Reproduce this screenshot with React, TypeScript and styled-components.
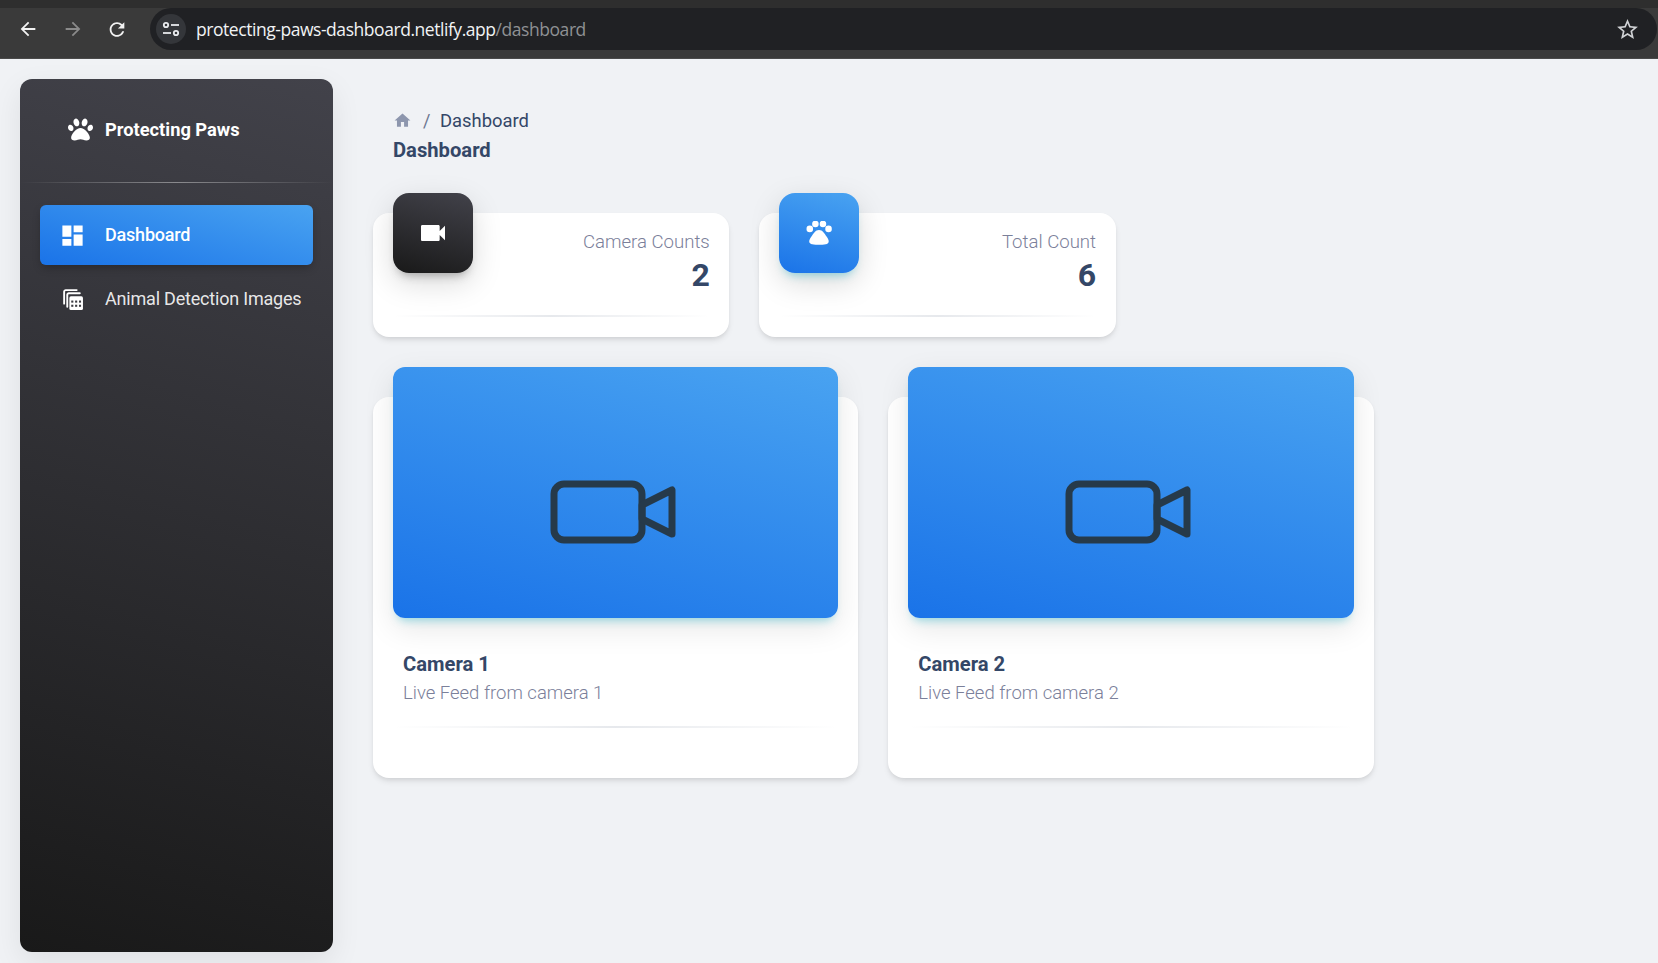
import React from 'react';
import styled, { createGlobalStyle } from 'styled-components';
import { FaPaw } from 'react-icons/fa';
import { MdDashboard, MdHome, MdVideocam, MdOutlineArrowBack, MdOutlineArrowForward, MdRefresh, MdOutlineStarBorder } from 'react-icons/md';

const GlobalStyle = createGlobalStyle`
  html, body { margin: 0; padding: 0; height: 100%; overflow: hidden; }
  body { background: #f0f2f5; font-family: Roboto, "Liberation Sans", sans-serif; }
  * { box-sizing: border-box; }
`;

const SiteIcon = () => (
  <svg width="18" height="16" viewBox="0 0 18 16" fill="none" stroke="#e8eaed" strokeWidth="1.8">
    <circle cx="4" cy="4" r="2.2" />
    <path d="M9 4H17" />
    <path d="M1 12H9" />
    <circle cx="14" cy="12" r="2.2" />
  </svg>
);

const GalleryIcon = () => (
  <svg width="23" height="23" viewBox="0 0 22 22" fill="none">
    <path d="M3 15V3.5C3 2.7 3.7 2 4.5 2H15" stroke="#fff" strokeWidth="1.8" strokeLinecap="round" />
    <path d="M6 18V6.5C6 5.7 6.7 5 7.5 5H18" stroke="#fff" strokeWidth="1.8" strokeLinecap="round" />
    <rect x="8" y="8" width="13" height="13" rx="1.5" fill="#fff" />
    <g fill="#3a3a40">
      <rect x="9.8" y="12" width="2" height="2" />
      <rect x="13.5" y="12" width="2" height="2" />
      <rect x="17.2" y="12" width="2" height="2" />
      <rect x="9.8" y="16" width="2" height="2" />
      <rect x="13.5" y="16" width="2" height="2" />
      <rect x="17.2" y="16" width="2" height="2" />
    </g>
  </svg>
);

const RoundPaw = () => (
  <svg width="26" height="24" viewBox="0 0 78 73" fill="#fff">
    <circle cx="11" cy="24" r="10" />
    <circle cx="28" cy="9" r="10" />
    <circle cx="51" cy="9" r="10" />
    <circle cx="68" cy="24" r="10" />
    <path d="M39 27C50 27 56 38 62 47C68 56 71 62 66 68C62 73 52 72 39 72C26 72 16 73 12 68C7 62 10 56 16 47C22 38 28 27 39 27Z" />
  </svg>
);

const BigCamera = () => (
  <svg width="126" height="64" viewBox="0 0 126 64" fill="none" stroke="#263a4a" strokeWidth="7" strokeLinejoin="round">
    <rect x="4" y="4" width="88" height="56" rx="10" />
    <path d="M92 25L122 10V54L92 39Z" />
  </svg>
);

const App = () => {
  const stats = [
    { label: 'Camera Counts', value: '2', dark: true, icon: <MdVideocam size={32} /> },
    { label: 'Total Count', value: '6', dark: false, icon: <RoundPaw /> },
  ];
  const cameras = ['1', '2'];

  return (
    <>
      <GlobalStyle />
      <Page>
        <BrowserBar>
          <NavButtons>
            <NavBtn><MdOutlineArrowBack size={22} /></NavBtn>
            <NavBtn $off><MdOutlineArrowForward size={22} /></NavBtn>
            <NavBtn><MdRefresh size={25} /></NavBtn>
          </NavButtons>
          <Omnibox>
            <SiteChip><SiteIcon /></SiteChip>
            <Url>protecting-paws-dashboard.netlify.app<UrlPath>/dashboard</UrlPath></Url>
            <Star><MdOutlineStarBorder size={25} /></Star>
          </Omnibox>
        </BrowserBar>
        <Body>
          <Sidebar>
            <Brand>
              <FaPaw size={25} />
              <BrandName>Protecting Paws</BrandName>
            </Brand>
            <SideDivider />
            <NavList>
              <NavItem $active>
                <NavIcon><MdDashboard size={27} /></NavIcon>
                Dashboard
              </NavItem>
              <NavItem>
                <NavIcon $inset><GalleryIcon /></NavIcon>
                Animal Detection Images
              </NavItem>
            </NavList>
          </Sidebar>
          <Main>
            <Header>
              <Crumbs>
                <MdHome size={19} color="#8d96ad" />
                <Slash>/</Slash>
                <Crumb>Dashboard</Crumb>
              </Crumbs>
              <PageTitle>Dashboard</PageTitle>
            </Header>
            <StatRow>
              {stats.map((s) => (
                <StatCard key={s.label}>
                  <StatBadge $dark={s.dark}>{s.icon}</StatBadge>
                  <StatLabel>{s.label}</StatLabel>
                  <StatValue>{s.value}</StatValue>
                  <StatLine />
                </StatCard>
              ))}
            </StatRow>
            <CameraRow>
              {cameras.map((n) => (
                <CameraCard key={n}>
                  <CameraFeed><BigCamera /></CameraFeed>
                  <CameraText>
                    <CameraName>Camera {n}</CameraName>
                    <CameraSub>Live Feed from camera {n}</CameraSub>
                  </CameraText>
                  <CameraLine />
                </CameraCard>
              ))}
            </CameraRow>
          </Main>
        </Body>
      </Page>
    </>
  );
};

export default App;

const Page = styled.div`
  width: 1658px;
  height: 963px;
  display: flex;
  flex-direction: column;
  overflow: hidden;
`;

const BrowserBar = styled.div`
  height: 59px;
  flex: none;
  display: flex;
  align-items: flex-start;
  gap: 22px;
  padding: 0 1px 0 17px;
  background: #3a3a3a;
  border-top: 8px solid #2e2e2e;
  border-bottom: 1px solid #4a4a4a;
`;

const NavButtons = styled.div`
  height: 42px;
  display: flex;
  align-items: center;
  gap: 22.5px;
`;

const NavBtn = styled.span<{ $off?: boolean }>`
  display: flex;
  width: 22px;
  justify-content: center;
  color: ${(p) => (p.$off ? '#8a8a8a' : '#f2f2f2')};
`;

const Omnibox = styled.div`
  flex: 1;
  height: 42px;
  display: flex;
  align-items: center;
  padding: 0 17px 0 6px;
  background: #202124;
  border-radius: 21px;
`;

const SiteChip = styled.span`
  width: 30px;
  height: 30px;
  display: flex;
  align-items: center;
  justify-content: center;
  border-radius: 50%;
  background: #34363a;
`;

const Url = styled.span`
  margin-left: 10px;
  flex: 1;
  font-family: "Open Sans", sans-serif;
  font-size: 17.5px;
  letter-spacing: -0.45px;
  color: #f1f3f4;
`;

const UrlPath = styled.span`
  color: #8f9194;
`;

const Star = styled.span`
  display: flex;
  color: #d0d2d5;
`;

const Body = styled.div`
  flex: 1;
  display: flex;
  align-items: flex-start;
  min-height: 0;
`;

const Sidebar = styled.aside`
  width: 313px;
  height: 873px;
  margin: 20px 0 0 20px;
  flex: none;
  border-radius: 12px;
  color: #fff;
  background: linear-gradient(195deg, #42424a, #191919);
  box-shadow: 0 10px 30px rgba(0, 0, 0, 0.08);
`;

const Brand = styled.div`
  height: 103px;
  display: flex;
  align-items: center;
  gap: 12px;
  padding: 0 0 2px 48px;
`;

const BrandName = styled.span`
  font-size: 18.3px;
  font-weight: 700;
`;

const SideDivider = styled.div`
  height: 1px;
  background: linear-gradient(to right, rgba(255, 255, 255, 0), rgba(255, 255, 255, 0.4), rgba(255, 255, 255, 0));
`;

const NavList = styled.nav`
  display: flex;
  flex-direction: column;
  gap: 4px;
  padding: 22px 20px 0;
`;

const NavItem = styled.div<{ $active?: boolean }>`
  height: 60px;
  display: flex;
  align-items: center;
  padding: 0 0 2px 19px;
  border-radius: 6px;
  font-size: 18px;
  font-weight: ${(p) => (p.$active ? 500 : 400)};
  letter-spacing: -0.2px;
  color: ${(p) => (p.$active ? '#fff' : 'rgba(255, 255, 255, 0.9)')};
  background: ${(p) => (p.$active ? 'linear-gradient(195deg, #49a3f1, #1a73e8)' : 'transparent')};
  box-shadow: ${(p) => (p.$active ? '0 4px 10px -2px rgba(0, 0, 0, 0.3)' : 'none')};
`;

const NavIcon = styled.span<{ $inset?: boolean }>`
  width: 46px;
  flex: none;
  display: flex;
  padding: 2px 0 0 ${(p) => (p.$inset ? '2px' : '0')};
`;

const Main = styled.main`
  flex: 1;
  padding: 0 0 0 40px;
`;

const Header = styled.div`
  padding: 49px 0 0 20px;
`;

const Crumbs = styled.div`
  display: flex;
  align-items: center;
  height: 24px;
`;

const Slash = styled.span`
  margin: 0 9.5px 0 11px;
  font-size: 18px;
  color: #6b7690;
`;

const Crumb = styled.span`
  font-size: 18.4px;
  color: #344767;
`;

const PageTitle = styled.h1`
  margin: 4px 0 0;
  font-size: 20.2px;
  line-height: 28px;
  font-weight: 700;
  color: #344767;
`;

const StatRow = styled.div`
  display: flex;
  gap: 30px;
  margin-top: 49px;
`;

const StatCard = styled.section`
  position: relative;
  width: 356.3px;
  height: 124px;
  padding: 16px 19.5px 0;
  background: #fff;
  border-radius: 16px;
  box-shadow: 0 4px 6px -1px rgba(0, 0, 0, 0.1), 0 2px 4px -1px rgba(0, 0, 0, 0.06);
  text-align: right;
`;

const StatBadge = styled.div<{ $dark: boolean }>`
  position: absolute;
  left: 20px;
  top: -20px;
  width: 80px;
  height: 80px;
  display: flex;
  align-items: center;
  justify-content: center;
  border-radius: 16px;
  color: #fff;
  background: ${(p) => (p.$dark ? 'linear-gradient(195deg, #42424a, #191919)' : 'linear-gradient(195deg, #49a3f1, #1a73e8)')};
  box-shadow: ${(p) =>
    p.$dark
      ? '0 10px 30px rgba(0, 0, 0, 0.15), 0 7px 10px -5px rgba(64, 64, 64, 0.4)'
      : '0 10px 30px rgba(0, 0, 0, 0.15), 0 7px 10px -5px rgba(0, 187, 212, 0.4)'};
`;

const StatLabel = styled.div`
  font-size: 18.6px;
  line-height: 26px;
  font-weight: 300;
  color: #7b809a;
`;

const StatValue = styled.div`
  margin-top: 3px;
  font-size: 32px;
  line-height: 34px;
  font-weight: 700;
  color: #344767;
`;

const FadeLine = styled.div`
  height: 2px;
  background: linear-gradient(to right, rgba(52, 71, 103, 0), rgba(52, 71, 103, 0.12), rgba(52, 71, 103, 0));
`;

const StatLine = styled(FadeLine)`
  margin: 23px 0 0 0.5px;
`;

const CameraLine = styled(FadeLine)`
  margin-top: 19px;
`;

const CameraRow = styled.div`
  display: flex;
  gap: 30px;
  margin-top: 60px;
`;

const CameraCard = styled.section`
  width: 485.3px;
  height: 381px;
  padding: 0 20px;
  background: #fff;
  border-radius: 16px;
  box-shadow: 0 4px 6px -1px rgba(0, 0, 0, 0.1), 0 2px 4px -1px rgba(0, 0, 0, 0.06);
`;

const CameraFeed = styled.div`
  position: relative;
  top: -30px;
  margin-bottom: -30px;
  height: 251px;
  display: flex;
  align-items: center;
  justify-content: center;
  padding: 38px 5px 0 0;
  border-radius: 12px;
  background: linear-gradient(195deg, #49a3f1, #1a73e8);
  box-shadow: 0 10px 30px rgba(0, 0, 0, 0.1), 0 7px 10px -5px rgba(0, 187, 212, 0.4);
`;

const CameraText = styled.div`
  padding: 32px 0 0 10px;
`;

const CameraName = styled.div`
  font-size: 20.2px;
  line-height: 29px;
  font-weight: 700;
  color: #344767;
`;

const CameraSub = styled.div`
  font-size: 18.5px;
  line-height: 28px;
  font-weight: 300;
  color: #7b809a;
`;
